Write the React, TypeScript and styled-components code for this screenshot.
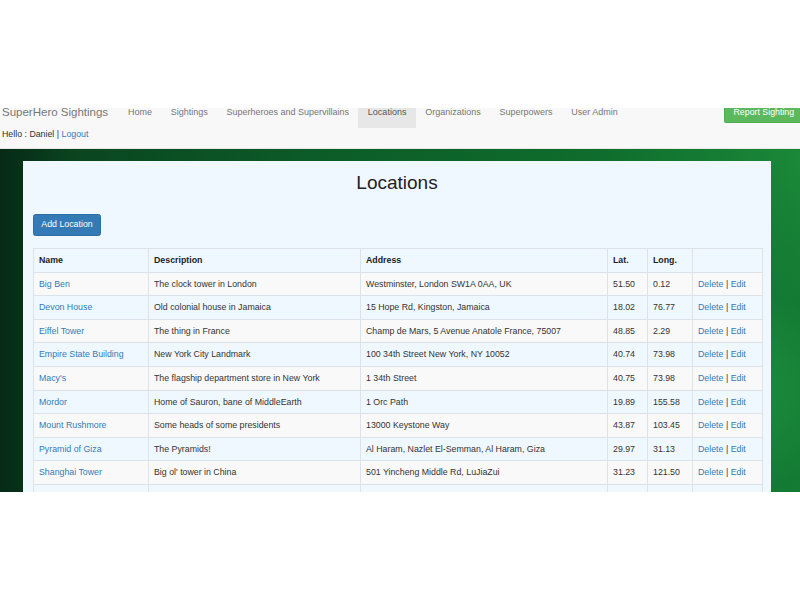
import React from "react";
import styled, { createGlobalStyle } from "styled-components";

const GlobalStyle = createGlobalStyle`
  html, body { margin: 0; padding: 0; background: #ffffff; }
  body { font-family: "Liberation Sans", Arial, Helvetica, sans-serif; color: #333; }
  * { box-sizing: border-box; }
`;

const Band = styled.div`
  margin-top: 108px;
  height: 384px;
  overflow: hidden;
`;

const Navbar = styled.nav`
  margin-top: -11.5px;
  background: #f8f8f8;
  border-bottom: 1px solid #e7e7e7;
`;

const NavTop = styled.div`
  display: flex;
  align-items: flex-start;
  height: 31.5px;
`;

const Brand = styled.a`
  display: block;
  width: 118.5px;
  padding: 9.5px 0 9.5px 2px;
  font-size: 11.5px;
  line-height: 12.6px;
  color: #777;
  text-decoration: none;
  white-space: nowrap;
`;

const NavList = styled.ul`
  display: flex;
  list-style: none;
  margin: 0;
  padding: 0;
`;

const NavLink = styled.a<{ $active?: boolean }>`
  display: block;
  padding: 9.5px 9.4px;
  font-size: 9px;
  line-height: 12.6px;
  color: ${(p) => (p.$active ? "#555" : "#777")};
  background: ${(p) => (p.$active ? "#e7e7e7" : "transparent")};
  text-decoration: none;
  white-space: nowrap;
`;

const ReportButton = styled.button`
  margin: 5px 0 0 auto;
  height: 21.4px;
  width: 76px;
  padding: 0 8.5px;
  font-family: inherit;
  font-size: 8.8px;
  line-height: 12.6px;
  color: #fff;
  background: #5cb85c;
  border: 1px solid #4cae4c;
  border-right: none;
  border-radius: 2.5px 0 0 2.5px;
  white-space: nowrap;
  text-align: left;
`;

const HelloRow = styled.div`
  padding: 0 0 7px 2px;
  font-size: 8.8px;
  line-height: 12.6px;
  color: #333;
`;

const Link = styled.a`
  color: #337ab7;
  text-decoration: none;
`;

const Main = styled.main`
  height: 345px;
  padding: 12px 0 0 23px;
  background:
    radial-gradient(ellipse 70% 90% at 85% 70%, #1f9440 0%, #137a33 35%, transparent 75%),
    linear-gradient(90deg, #062a16 0%, #0a4620 10%, #0c5c28 40%, #0f6d2d 75%, #1a8838 100%);
`;

const Panel = styled.section`
  display: flow-root;
  width: 748px;
  min-height: 400px;
  background: #f0f8ff;
  padding: 0 10px;
`;

const Title = styled.h2`
  margin: 12.6px 0 0;
  font-size: 19px;
  line-height: 20.9px;
  font-weight: 400;
  color: #222;
  text-align: center;
`;

const AddButton = styled.button`
  display: block;
  margin-top: 19.5px;
  height: 22px;
  width: 68px;
  padding: 0;
  font-family: inherit;
  font-size: 8.8px;
  line-height: 12.6px;
  color: #fff;
  background: #337ab7;
  border: 1px solid #2e6da4;
  border-radius: 2.5px;
`;

const Table = styled.table`
  margin-top: 12.5px;
  width: 729px;
  border-collapse: collapse;
  table-layout: fixed;
  font-size: 8.8px;
  line-height: 12.6px;
  color: #333;
`;

const Th = styled.th<{ $w: number }>`
  width: ${(p) => p.$w}px;
  height: 23.5px;
  padding: 0 5px;
  text-align: left;
  font-weight: 700;
  color: #222;
  border: 1px solid #dde3e8;
  border-bottom-width: 1.3px;
`;

const Row = styled.tr<{ $odd: boolean }>`
  background: ${(p) => (p.$odd ? "#f9f9f9" : "transparent")};
`;

const Td = styled.td`
  height: 23.6px;
  padding: 0 5px;
  border: 1px solid #dde3e8;
  white-space: nowrap;
  overflow: hidden;
`;

const Sep = styled.span`
  color: #333;
`;

const columns = [
  { label: "Name", w: 115 },
  { label: "Description", w: 212 },
  { label: "Address", w: 247 },
  { label: "Lat.", w: 40 },
  { label: "Long.", w: 45 },
  { label: "", w: 70 },
];

const rows = [
  ["Big Ben", "The clock tower in London", "Westminster, London SW1A 0AA, UK", "51.50", "0.12"],
  ["Devon House", "Old colonial house in Jamaica", "15 Hope Rd, Kingston, Jamaica", "18.02", "76.77"],
  ["Eiffel Tower", "The thing in France", "Champ de Mars, 5 Avenue Anatole France, 75007", "48.85", "2.29"],
  ["Empire State Building", "New York City Landmark", "100 34th Street New York, NY 10052", "40.74", "73.98"],
  ["Macy's", "The flagship department store in New York", "1 34th Street", "40.75", "73.98"],
  ["Mordor", "Home of Sauron, bane of MiddleEarth", "1 Orc Path", "19.89", "155.58"],
  ["Mount Rushmore", "Some heads of some presidents", "13000 Keystone Way", "43.87", "103.45"],
  ["Pyramid of Giza", "The Pyramids!", "Al Haram, Nazlet El-Semman, Al Haram, Giza", "29.97", "31.13"],
  ["Shanghai Tower", "Big ol' tower in China", "501 Yincheng Middle Rd, LuJiaZui", "31.23", "121.50"],
  ["The White House", "This is where the president lives", "1600 Pennsylvania Ave", "38.89", "77.03"],
];

const navItems = [
  "Home",
  "Sightings",
  "Superheroes and Supervillains",
  "Locations",
  "Organizations",
  "Superpowers",
  "User Admin",
];

export default function App() {
  return (
    <>
      <GlobalStyle />
      <Band>
        <Navbar>
          <NavTop>
            <Brand href="#">SuperHero Sightings</Brand>
            <NavList>
              {navItems.map((n) => (
                <li key={n}>
                  <NavLink href="#" $active={n === "Locations"}>
                    {n}
                  </NavLink>
                </li>
              ))}
            </NavList>
            <ReportButton>Report Sighting</ReportButton>
          </NavTop>
          <HelloRow>
            Hello : Daniel | <Link href="#">Logout</Link>
          </HelloRow>
        </Navbar>
        <Main>
          <Panel>
            <Title>Locations</Title>
            <AddButton>Add Location</AddButton>
            <Table>
              <thead>
                <tr>
                  {columns.map((c, i) => (
                    <Th key={i} $w={c.w}>
                      {c.label}
                    </Th>
                  ))}
                </tr>
              </thead>
              <tbody>
                {rows.map((r, i) => (
                  <Row key={r[0]} $odd={i % 2 === 0}>
                    <Td>
                      <Link href="#">{r[0]}</Link>
                    </Td>
                    <Td>{r[1]}</Td>
                    <Td>{r[2]}</Td>
                    <Td>{r[3]}</Td>
                    <Td>{r[4]}</Td>
                    <Td>
                      <Link href="#">Delete</Link> <Sep>|</Sep> <Link href="#">Edit</Link>
                    </Td>
                  </Row>
                ))}
              </tbody>
            </Table>
          </Panel>
        </Main>
      </Band>
    </>
  );
}
